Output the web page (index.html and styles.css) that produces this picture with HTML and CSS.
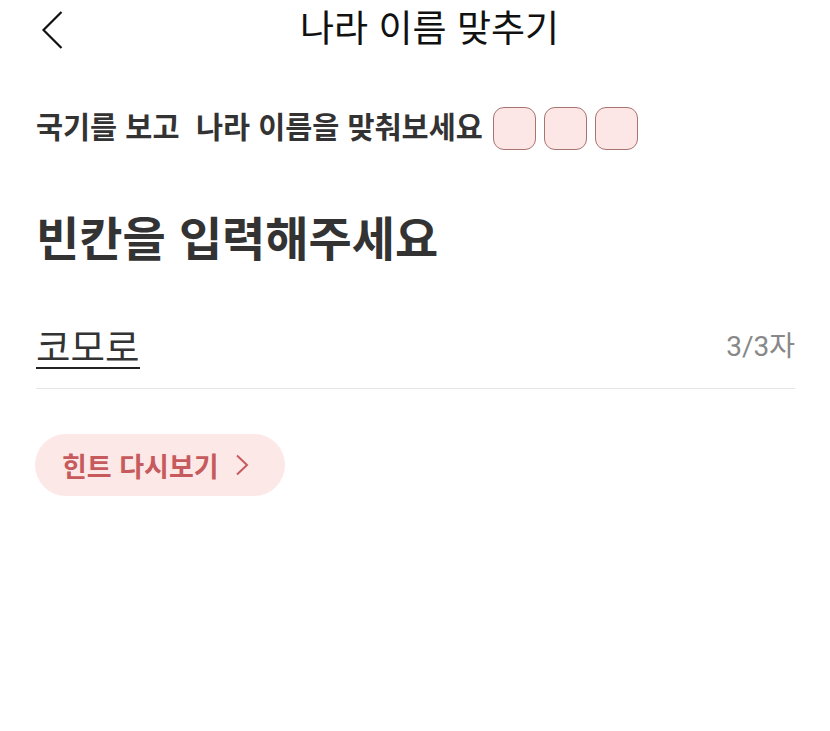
FILE: index.html
```html
<!DOCTYPE html>
<html lang="ko">
<head>
<meta charset="utf-8">
<title>나라 이름 맞추기</title>
<link rel="stylesheet" href="styles.css">
</head>
<body>
<div class="page">
  <header class="header">
    <button class="back" aria-label="뒤로">
      <svg width="22" height="38" viewBox="0 0 22 38"><path d="M20.5 1 L2.5 19 L20.5 37" fill="none" stroke="#111" stroke-width="2.2" stroke-linejoin="miter"/></svg>
    </button>
    <h1 class="title">나라 이름 맞추기</h1>
    <span class="spacer"></span>
  </header>
  <main class="quiz">
    <div class="question">
      <p class="question-text">국기를 보고&nbsp; 나라 이름을 맞춰보세요</p>
      <div class="blanks">
        <span class="blank"></span>
        <span class="blank"></span>
        <span class="blank"></span>
      </div>
    </div>
    <h2 class="prompt">빈칸을 입력해주세요</h2>
    <div class="answer-row">
      <span class="answer">코모로</span>
      <span class="count">3/3자</span>
    </div>
    <button class="hint">힌트 다시보기
      <svg width="14" height="22" viewBox="0 0 14 22"><path d="M2 1.5 L12 11 L2 20.5" fill="none" stroke="#c65a5c" stroke-width="2"/></svg>
    </button>
  </main>
</div>
</body>
</html>
```

FILE: styles.css
```css
* { box-sizing: border-box; }
html, body { margin: 0; padding: 0; background: #fff; }
body {
  font-family: "Noto Sans CJK KR", "Noto Sans", sans-serif;
  color: #333;
}
.page { width: 830px; min-height: 731px; }

.header {
  height: 60px;
  display: grid;
  grid-template-columns: 1fr auto 1fr;
  align-items: center;
  padding: 0 12px 0 41px;
}
.back {
  justify-self: start;
  display: flex;
  padding: 0;
  margin: 0;
  border: 0;
  background: none;
}
.title {
  margin: -7px 0 0;
  font-size: 37px;
  font-weight: 400;
  color: #111;
  line-height: 1;
  letter-spacing: 0;
}

.quiz { padding: 0 35px 0 36px; }

.question {
  display: flex;
  align-items: center;
  margin-top: 47px;
  gap: 10px;
}
.question-text {
  margin: -5px 0 0;
  font-size: 29.4px;
  font-weight: 700;
  color: #333;
  line-height: 1.2;
}
.blanks { display: flex; gap: 8px; }
.blank {
  width: 43px;
  height: 43px;
  border: 1.6px solid #a87472;
  border-radius: 11px;
  background: #fde6e6;
}

.prompt {
  margin: 58px 0 0;
  font-size: 47px;
  font-weight: 700;
  color: #333;
  line-height: 1.2;
}

.answer-row {
  display: flex;
  justify-content: space-between;
  align-items: flex-start;
  margin-top: 58px;
  padding-bottom: 19px;
  border-bottom: 1px solid #e6e6e6;
}
.answer {
  font-size: 37.5px;
  color: #333;
  line-height: 1.2;
  padding-bottom: 0;
  border-bottom: 2px solid #222;
}
.count {
  font-size: 28px;
  color: #888;
  line-height: 1.2;
  padding-top: 8px;
  font-family: Roboto, "Noto Sans CJK KR", sans-serif;
}

.hint {
  margin-top: 45px;
  width: 250px;
  height: 62px;
  border: 0;
  border-radius: 31px;
  background: #fde8e8;
  color: #c65a5c;
  font-family: "Noto Sans CJK KR", sans-serif;
  font-size: 27px;
  font-weight: 700;
  display: flex;
  align-items: center;
  gap: 16px;
  padding: 0 0 0 27px;
  margin-left: -1px;
}
```
